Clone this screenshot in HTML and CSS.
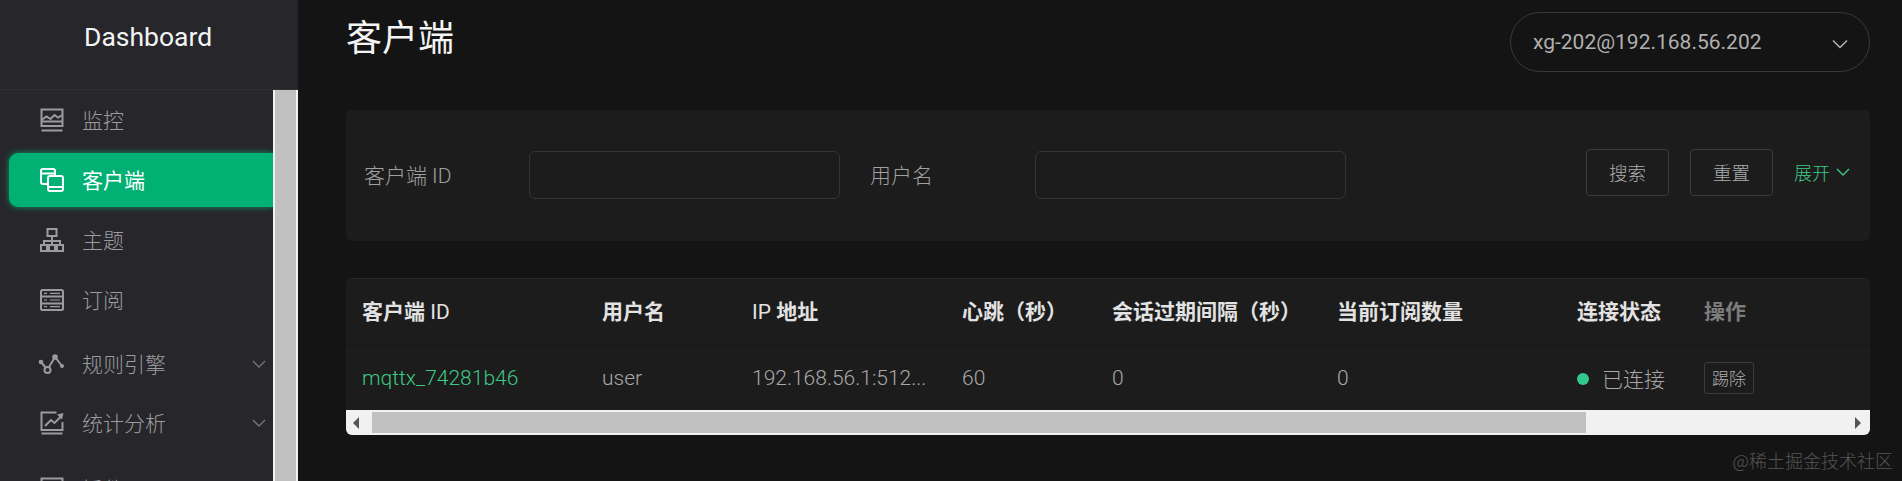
FILE: index.html
```html
<!DOCTYPE html>
<html lang="zh-CN">
<head>
    <meta charset="UTF-8">
    <meta name="viewport" content="width=device-width, initial-scale=1.0">
    <title>Dashboard - 客户端</title>
    <link rel="stylesheet" href="styles.css">
</head>
<body>
    <aside class="sidebar">
        <div class="logo">Dashboard</div>
        <div class="menu-wrap">
            <ul class="menu">
                <li class="menu-item">
                    <svg class="menu-icon" viewBox="0 0 24 24"><rect x="1.500" y="1.500" width="21" height="16.500"/><path d="M1.500 12l5-3.500 4 2.500 4-4 3.500 2.500 4.500-2.500"/><path d="M1.500 13.500h21M1.500 22.500h21"/></svg>
                    <span>监控</span>
                </li>
                <li class="menu-item active">
                    <svg class="menu-icon" viewBox="0 0 24 24"><path d="M7 16H3a2 2 0 0 1-2-2V3a2 2 0 0 1 2-2h10a2 2 0 0 1 2 2v5"/><path d="M1 5.500h14"/><rect x="8" y="8" width="15" height="15" rx="2"/><path d="M8 19h15"/></svg>
                    <span>客户端</span>
                </li>
                <li class="menu-item">
                    <svg class="menu-icon" viewBox="0 0 24 24"><rect x="7.500" y="1" width="9" height="7"/><path d="M12 8v9M4 17v-4h16v4"/><rect x="1" y="17" width="6" height="6"/><rect x="9" y="17" width="6" height="6"/><rect x="17" y="17" width="6" height="6"/></svg>
                    <span>主题</span>
                </li>
                <li class="menu-item">
                    <svg class="menu-icon" viewBox="0 0 24 24"><rect x="1" y="2" width="22" height="20" rx="1.500"/><path d="M1 8.500h22M1 15.500h22"/><path class="thin" d="M4 5.300h3M10 5.300h10M4 12h3M10 12h10M4 18.700h3M10 18.700h10"/></svg>
                    <span>订阅</span>
                </li>
                <li class="menu-item sub">
                    <svg class="menu-icon wide" viewBox="0 0 26 24"><path d="M3 10l5 6M11 15l6-10M17 5l7 9"/><circle class="solid" cx="3" cy="10" r="2.300"/><circle cx="9.500" cy="18" r="3"/><circle class="solid" cx="17" cy="5" r="2.800"/><circle class="solid" cx="24" cy="14" r="2"/></svg>
                    <span>规则引擎</span>
                    <svg class="menu-arrow" viewBox="0 0 14 8"><path d="M1 1l6 6 6-6"/></svg>
                </li>
                <li class="menu-item sub">
                    <svg class="menu-icon" viewBox="0 0 24 24"><path d="M22.500 11v8h-21V1.500h15"/><path d="M1.500 22.500h21"/><path d="M5 15l6-6 3.500 3 6-6"/><path class="solid" d="M17 3.500l6.500-1.500-1.500 6.500z"/></svg>
                    <span>统计分析</span>
                    <svg class="menu-arrow" viewBox="0 0 14 8"><path d="M1 1l6 6 6-6"/></svg>
                </li>
                <li class="menu-item last">
                    <svg class="menu-icon" viewBox="0 0 24 24"><rect x="1.500" y="1.500" width="21" height="21"/></svg>
                    <span>插件</span>
                </li>
            </ul>
            <div class="side-scroll"></div>
        </div>
    </aside>

    <main class="content">
        <header class="page-head">
            <h1>客户端</h1>
            <div class="node-select">
                <span>xg-202@192.168.56.202</span>
                <svg class="select-arrow" viewBox="0 0 16 10"><path d="M1 1.500l7 7 7-7"/></svg>
            </div>
        </header>

        <section class="filter-card">
            <label class="filter-label">客户端 ID</label>
            <div class="filter-input"></div>
            <label class="filter-label second">用户名</label>
            <div class="filter-input"></div>
            <div class="filter-actions">
                <button class="btn">搜索</button>
                <button class="btn">重置</button>
                <a class="expand">展开<svg viewBox="0 0 14 8"><path d="M1 1l6 6 6-6"/></svg></a>
            </div>
        </section>

        <section class="table-card">
            <table class="client-table">
                <colgroup>
                    <col class="c1"><col class="c2"><col class="c3"><col class="c4"><col class="c5"><col class="c6"><col class="c7"><col class="c8">
                </colgroup>
                <thead>
                    <tr>
                        <th>客户端 <span class="latin">ID</span></th>
                        <th>用户名</th>
                        <th><span class="latin">IP</span> 地址</th>
                        <th>心跳（秒）</th>
                        <th>会话过期间隔（秒）</th>
                        <th>当前订阅数量</th>
                        <th>连接状态</th>
                        <th class="fixed dim">操作</th>
                    </tr>
                </thead>
                <tbody>
                    <tr>
                        <td><a class="client-link">mqttx_74281b46</a></td>
                        <td>user</td>
                        <td>192.168.56.1:512...</td>
                        <td>60</td>
                        <td>0</td>
                        <td>0</td>
                        <td><span class="dot"></span>已连接</td>
                        <td class="fixed"><button class="kick">踢除</button></td>
                    </tr>
                </tbody>
            </table>
            <div class="h-scroll">
                <div class="h-btn"><svg viewBox="0 0 6 12"><path d="M6 0v12L0 6z"/></svg></div>
                <div class="h-thumb"></div>
                <div class="h-rest"><svg viewBox="0 0 6 12"><path d="M0 0v12l6-6z"/></svg></div>
            </div>
        </section>
        <div class="watermark">@稀土掘金技术社区</div>
    </main>
</body>
</html>
```

FILE: styles.css
```css
* { margin: 0; padding: 0; box-sizing: border-box; }
html, body { height: 100%; }
body {
    display: flex;
    overflow: hidden;
    background: #141414;
    color: #a8a8a8;
    font-family: Roboto, "Noto Sans CJK SC", sans-serif;
    font-size: 21px;
}

/* sidebar */
.sidebar {
    width: 298px;
    flex-shrink: 0;
    height: 100%;
    overflow: hidden;
    display: flex;
    flex-direction: column;
    background: #26262b;
}
.logo {
    height: 90px;
    padding: 20px 0 0 84px;
    border-bottom: 1px solid #303035;
    color: #f4f4f4;
    font-size: 26.500px;
    line-height: 33px;
}
.menu-wrap {
    flex: 1;
    display: flex;
    min-height: 0;
}
.menu {
    list-style: none;
    width: 273px;
    padding-top: 3px;
}
.menu-item {
    height: 54px;
    margin: 0 0 6px 9px;
    padding-left: 31px;
    display: flex;
    align-items: center;
    color: #9c9c9f;
    font-size: 21px;
    font-weight: 300;
}
.menu-item span { margin: 0 0 2px 18px; }
.menu-item.sub { height: 60px; margin-bottom: 0; padding-top: 2px; }
.menu-item.sub + .sub { height: 59px; padding-top: 0; }
.menu-item.last { margin-top: 10px; }
.menu-item.active {
    background: #00b173;
    border-radius: 9px 0 0 9px;
    box-shadow: 0 0 6px rgba(0, 200, 130, 0.7);
    color: #fff;
    font-weight: 400;
}
.menu-icon {
    width: 24px;
    height: 24px;
    flex-shrink: 0;
    fill: none;
    stroke: currentColor;
    stroke-width: 2;
}
.menu-icon.wide { width: 26px; margin-left: -2px; }
.menu-icon .solid { fill: currentColor; stroke: none; }
.menu-icon .thin { stroke-width: 1.200; }
.menu-arrow {
    width: 14px;
    height: 8px;
    margin: 0 7px 0 auto;
    fill: none;
    stroke: #77777a;
    stroke-width: 1.300;
}
.side-scroll {
    width: 25px;
    background: #c1c1c1;
    border-left: 2px solid #f1f1f1;
    border-right: 2px solid #f1f1f1;
}

/* main column */
.content {
    flex: 1;
    min-width: 0;
    padding: 0 32px 0 48px;
}
.page-head {
    height: 110px;
    display: flex;
    justify-content: space-between;
    align-items: flex-start;
}
h1 {
    margin-top: 14px;
    color: #f4f4f4;
    font-size: 36px;
    line-height: 50px;
    font-weight: 400;
}
.node-select {
    width: 360px;
    height: 60px;
    margin-top: 12px;
    padding: 0 21px 0 22px;
    display: flex;
    align-items: center;
    justify-content: space-between;
    border: 1px solid #39393b;
    border-radius: 30px;
    color: #b0b0b0;
    font-size: 21px;
}
.select-arrow {
    width: 16px;
    height: 10px;
    margin-top: 4px;
    fill: none;
    stroke: #b5b5b5;
    stroke-width: 1.500;
}

/* filter */
.filter-card {
    height: 131px;
    padding: 0 18px 1px;
    display: flex;
    align-items: center;
    background: #1c1c1d;
    border-radius: 6px;
}
.filter-label {
    width: 165px;
    margin-bottom: 2px;
    flex-shrink: 0;
    color: #a0a0a0;
    font-size: 21px;
    font-weight: 300;
}
.filter-label.second { margin-left: 30px; }
.filter-input {
    width: 311px;
    height: 48px;
    border: 1px solid #343436;
    border-radius: 6px;
}
.filter-actions {
    margin: 0 0 6px auto;
    display: flex;
    align-items: center;
}
.btn {
    width: 83px;
    height: 47px;
    margin-right: 21px;
    background: transparent;
    border: 1px solid #3c3c3e;
    border-radius: 4px;
    color: #adadad;
    font: 300 18.500px Roboto, "Noto Sans CJK SC", sans-serif;
}
.expand {
    width: 58px;
    display: flex;
    align-items: center;
    color: #3ec985;
    font-size: 18px;
    font-weight: 300;
}
.expand svg {
    width: 14px;
    height: 8px;
    margin-left: 6px;
    fill: none;
    stroke: #3ec985;
    stroke-width: 1.300;
}

/* table */
.table-card {
    margin-top: 37px;
    border-top: 1px solid #262627;
    border-radius: 6px;
    overflow: hidden;
    background: #1c1c1d;
}
.client-table {
    width: 100%;
    table-layout: fixed;
    border-collapse: collapse;
}
.c1 { width: 240px; }
.c2 { width: 150px; }
.c3 { width: 210px; }
.c4 { width: 150px; }
.c5 { width: 225px; }
.c6 { width: 240px; }
.c7 { width: 127px; }
th, td {
    padding: 0 0 0 16px;
    text-align: left;
    white-space: nowrap;
}
th {
    height: 66px;
    padding-bottom: 4px;
    border-bottom: 1px solid #161616;
    color: #e2e2e2;
    font-size: 21px;
    font-weight: 700;
}
th .latin { font-weight: 400; }
td {
    height: 65px;
    color: #a8a8a8;
    font-size: 21px;
    font-weight: 300;
}
.fixed {
    position: relative;
    background: #1c1c1d;
    box-shadow: -6px 4px 12px rgba(0, 0, 0, 0.25);
}
th.dim { color: #7c7c7c; }
.client-link { color: #3ec985; }
.dot {
    display: inline-block;
    width: 12px;
    height: 12px;
    margin-right: 13px;
    border-radius: 50%;
    background: #34c78d;
    vertical-align: 2px;
}
.kick {
    width: 50px;
    height: 32px;
    background: transparent;
    border: 1px solid #3c3c3e;
    border-radius: 3px;
    color: #adadad;
    font: 300 17px "Noto Sans CJK SC", sans-serif;
}
.h-scroll {
    height: 25px;
    display: flex;
    padding: 2px 0;
    background: #f1f1f1;
}
.h-btn {
    width: 26px;
    display: flex;
    align-items: center;
    padding-left: 7px;
}
.h-btn svg, .h-rest svg {
    width: 6px;
    height: 12px;
    fill: #555;
}
.h-thumb {
    width: 1214px;
    background: #c1c1c1;
}
.h-rest {
    flex: 1;
    display: flex;
    align-items: center;
    justify-content: flex-end;
    padding-right: 9px;
}
.watermark {
    position: absolute;
    right: 9px;
    bottom: 8px;
    color: #555;
    font-family: "Noto Sans CJK SC", sans-serif;
    font-size: 18px;
    font-weight: 300;
}
```
